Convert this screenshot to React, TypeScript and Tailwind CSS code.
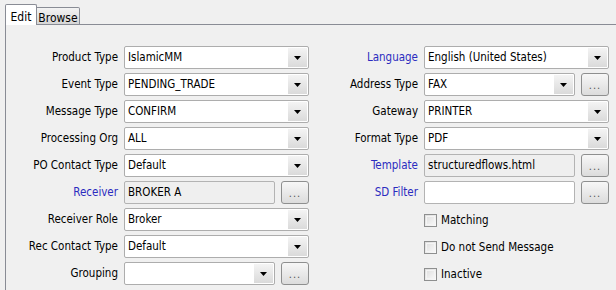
import React from "react";

type Ctl =
  | { kind: "combo"; value: string; button?: boolean }
  | { kind: "text"; value: string; readOnly?: boolean; button?: boolean }
  | { kind: "check"; label: string }
  | { kind: "none" };

type Row = { label?: string; blue?: boolean; ctl: Ctl };

const leftRows: Row[] = [
  { label: "Product Type", ctl: { kind: "combo", value: "IslamicMM" } },
  { label: "Event Type", ctl: { kind: "combo", value: "PENDING_TRADE" } },
  { label: "Message Type", ctl: { kind: "combo", value: "CONFIRM" } },
  { label: "Processing Org", ctl: { kind: "combo", value: "ALL" } },
  { label: "PO Contact Type", ctl: { kind: "combo", value: "Default" } },
  { label: "Receiver", blue: true, ctl: { kind: "text", value: "BROKER A", readOnly: true, button: true } },
  { label: "Receiver Role", ctl: { kind: "combo", value: "Broker" } },
  { label: "Rec Contact Type", ctl: { kind: "combo", value: "Default" } },
  { label: "Grouping", ctl: { kind: "combo", value: "", button: true } },
];

const rightRows: Row[] = [
  { label: "Language", blue: true, ctl: { kind: "combo", value: "English (United States)" } },
  { label: "Address Type", ctl: { kind: "combo", value: "FAX", button: true } },
  { label: "Gateway", ctl: { kind: "combo", value: "PRINTER" } },
  { label: "Format Type", ctl: { kind: "combo", value: "PDF" } },
  { label: "Template", blue: true, ctl: { kind: "text", value: "structuredflows.html", readOnly: true, button: true } },
  { label: "SD Filter", blue: true, ctl: { kind: "text", value: "", button: true } },
  { ctl: { kind: "check", label: "Matching" } },
  { ctl: { kind: "check", label: "Do not Send Message" } },
  { ctl: { kind: "check", label: "Inactive" } },
];

function DotsButton() {
  return (
    <div className="ml-[6px] flex h-[23px] w-[28px] shrink-0 items-end justify-center rounded-[3px] border border-[#8e8f8f] bg-linear-to-b from-[#f7f7f7] to-[#dcdcdc] pb-[4px] text-[11px] leading-none tracking-[1px] text-[#555]">
      ...
    </div>
  );
}

function Arrow() {
  return (
    <div className="flex h-full w-[19px] items-center justify-center bg-linear-to-b from-[#f4f4f4] to-[#dadada]">
      <svg width="7" height="4" viewBox="0 0 7 4">
        <path d="M0 0H7L3.5 4Z" fill="#000" />
      </svg>
    </div>
  );
}

function Control({ ctl }: { ctl: Ctl }) {
  if (ctl.kind === "combo") {
    return (
      <div className="flex w-full">
        <div className="flex h-[23px] min-w-0 flex-1 items-center rounded-[2px] border border-[#adadad] bg-white p-[1px]">
          <div className="flex-1 truncate pl-[2px] text-[11.5px]">{ctl.value}</div>
          <Arrow />
        </div>
        {ctl.button ? <DotsButton /> : null}
      </div>
    );
  }
  if (ctl.kind === "text") {
    return (
      <div className="flex w-full">
        <div
          className={
            "flex h-[23px] min-w-0 flex-1 items-center rounded-[2px] border border-[#b3b3b3] pl-[3px] text-[11.5px] " +
            (ctl.readOnly ? "bg-[#efefef]" : "bg-white")
          }
        >
          {ctl.value}
        </div>
        {ctl.button ? <DotsButton /> : null}
      </div>
    );
  }
  if (ctl.kind === "check") {
    return (
      <div className="flex items-center gap-[4px] pt-[2px]">
        <div className="h-[13px] w-[13px] border border-[#8e8f8f] bg-linear-to-br from-[#dcdcdc] to-[#fbfbfb] p-[1px]">
          <div className="h-full w-full border border-[#f4f4f4]" />
        </div>
        <span className="text-[11.5px]">{ctl.label}</span>
      </div>
    );
  }
  return null;
}

function Column({ rows, labelW }: { rows: Row[]; labelW: string }) {
  return (
    <div className="flex flex-col gap-[4px]">
      {rows.map((r, i) => (
        <div key={i} className="flex h-[23px] items-center">
          <div
            className={
              labelW + " shrink-0 pr-[6px] text-right text-[11.5px] " + (r.blue ? "text-[#2b2bbf]" : "text-black")
            }
          >
            {r.label}
          </div>
          <div className="flex w-[185px] items-center">
            <Control ctl={r.ctl} />
          </div>
        </div>
      ))}
    </div>
  );
}

export default function App() {
  return (
    <div className="h-[290px] w-[616px] overflow-hidden bg-[#f0f0f0] font-['DejaVu_Sans_Condensed','DejaVu_Sans',sans-serif] text-[11px] text-black [font-stretch:condensed]">
      {/* Tabs */}
      <div className="flex h-[25px] items-end pl-[5px] pt-[4px]">
        <div className="flex h-[21px] w-[32px] items-start justify-center rounded-t-[2px] border border-b-0 border-[#898c95] bg-white pt-[3px] text-[12px]">
          Edit
        </div>
        <div className="flex h-[18px] w-[43px] items-start justify-center rounded-tr-[2px] border border-l-0 border-[#898c95] bg-linear-to-b from-[#f3f3f3] to-[#d6d6d6] pt-[1px] text-[12px]">
          Browse
        </div>
        <div className="h-full flex-1 border-b border-[#898c95]" />
      </div>

      {/* Panel */}
      <div className="ml-[5px] flex h-full border-l border-[#898c95] pt-[21px]">
        <Column rows={leftRows} labelW="w-[118px]" />
        <Column rows={rightRows} labelW="w-[115px]" />
      </div>
    </div>
  );
}
